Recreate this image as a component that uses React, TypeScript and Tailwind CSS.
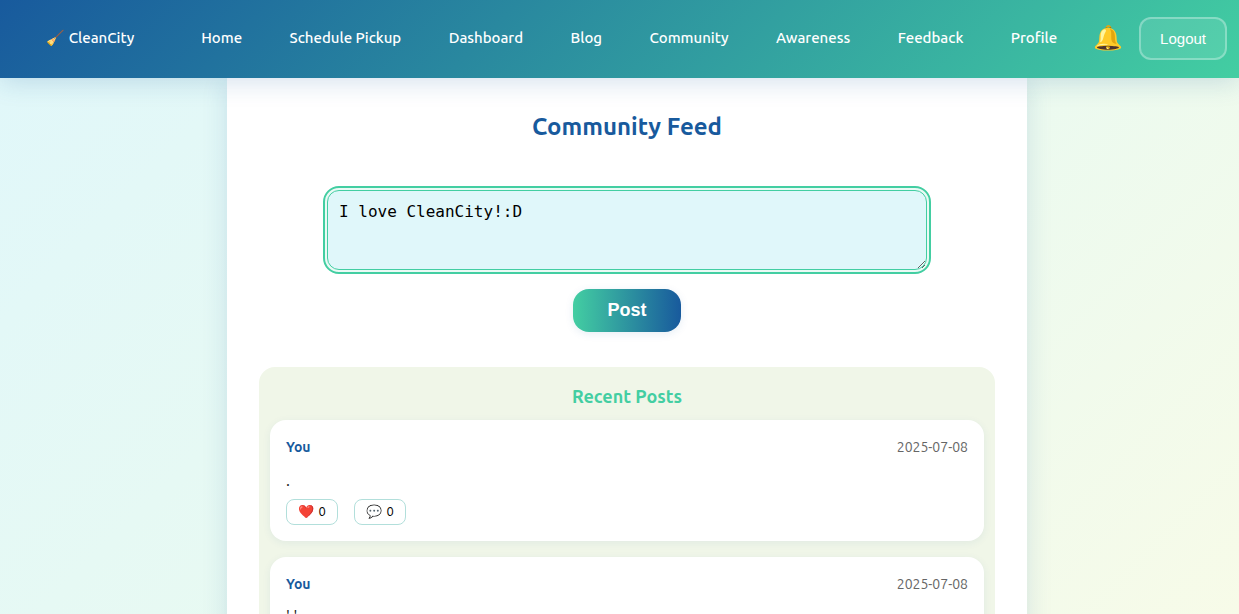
import { useState } from "react";

const links = ["Home", "Schedule Pickup", "Dashboard", "Blog", "Community", "Awareness", "Feedback", "Profile"];

const posts = [
  { id: 1, author: "You", date: "2025-07-08", text: ".", likes: 0, comments: 0 },
  { id: 2, author: "You", date: "2025-07-08", text: "' '", likes: 0, comments: 0 },
];

function Header() {
  return (
    <header className="sticky top-0 z-10 flex h-[78px] items-center bg-[linear-gradient(135deg,#185a9d_0%,#43cea2_100%)] pr-3 pb-0.5 pl-[46px] text-[15px] font-medium text-white shadow-[0_4px_24px_rgba(24,90,157,0.18)]">
      <a href="#" className="flex items-center gap-1 whitespace-nowrap">
        <span>🧹</span>
        <span>CleanCity</span>
      </a>
      <nav className="flex flex-1 items-center justify-between pr-9 pl-[67px]">
        {links.map((link) => (
          <a key={link} href="#" className="whitespace-nowrap">
            {link}
          </a>
        ))}
      </nav>
      <button type="button" aria-label="Notifications" className="mr-[18px] w-7 text-2xl leading-7">
        🔔
      </button>
      <button
        type="button"
        className="h-[43px] rounded-xl border-2 border-white/30 bg-white/10 px-[19px] pt-0.5 font-['Liberation_Sans',sans-serif] text-[15px] font-normal"
      >
        Logout
      </button>
    </header>
  );
}

function Post({ post }: { post: (typeof posts)[number] }) {
  return (
    <article className="rounded-2xl bg-white p-4 shadow-[0_2px_8px_rgba(24,90,157,0.07)]">
      <div className="flex items-center justify-between text-sm leading-[22px]">
        <strong className="font-bold text-[#185a9d]">{post.author}</strong>
        <time className="text-[#666]">{post.date}</time>
      </div>
      <p className="mt-[11px] text-base leading-[22px] text-[#222]">{post.text}</p>
      <div className="mt-2 flex gap-4">
        <button
          type="button"
          aria-label="Like"
          className="flex h-[26px] w-[52px] items-center justify-center gap-1 rounded-lg border border-[#b2dfdb] bg-white text-[13px] text-black"
        >
          <span>❤️</span>
          <span>{post.likes}</span>
        </button>
        <button
          type="button"
          aria-label="Comment"
          className="flex h-[26px] w-[52px] items-center justify-center gap-1 rounded-lg border border-[#b2dfdb] bg-white text-[13px] text-black"
        >
          <span>💬</span>
          <span>{post.comments}</span>
        </button>
      </div>
    </article>
  );
}

export default function App() {
  const [draft, setDraft] = useState("I love CleanCity!:D");

  return (
    <div className="min-h-screen bg-[linear-gradient(135deg,#e0f7fa_0%,#e9faf1_50%,#f9fbe7_100%)] font-['Ubuntu','Noto_Sans','Noto_Color_Emoji',sans-serif]">
      <Header />
      <div className="pl-[15px]">
        <main className="mx-auto max-w-[800px] bg-white px-8 pt-[33px] pb-8 shadow-[0_4px_24px_rgba(24,90,157,0.15)]">
          <h1 className="text-center text-2xl font-bold text-[#185a9d]">Community Feed</h1>
          <form className="mt-[47px] flex flex-col items-center" onSubmit={(event) => event.preventDefault()}>
            <textarea
              aria-label="Write a post"
              value={draft}
              onChange={(event) => setDraft(event.target.value)}
              className="block h-20 w-full max-w-[600px] resize rounded-xl border border-[#43cea2] bg-[#e0f7fa] p-[11px] font-['DejaVu_Sans_Mono',monospace] text-base leading-5 text-black shadow-[0_0_0_2px_#eafaf5] outline-2 outline-offset-2 outline-[#43cea2]"
            />
            <button
              type="submit"
              className="mt-[19px] h-[43px] rounded-2xl bg-[linear-gradient(90deg,#43cea2_0%,#185a9d_100%)] px-[34px] pb-0.5 font-['Liberation_Sans',sans-serif] text-lg font-bold text-white shadow-[0_2px_8px_rgba(24,90,157,0.1)]"
            >
              Post
            </button>
          </form>
          <section className="mt-[35px] rounded-2xl bg-[#f0f6e8] px-[11px] pt-[15px] pb-4">
            <h2 className="text-center text-lg leading-7 font-semibold text-[#43cea2]">Recent Posts</h2>
            <div className="mt-2.5 flex flex-col gap-4">
              {posts.map((post) => (
                <Post key={post.id} post={post} />
              ))}
            </div>
          </section>
        </main>
      </div>
    </div>
  );
}
